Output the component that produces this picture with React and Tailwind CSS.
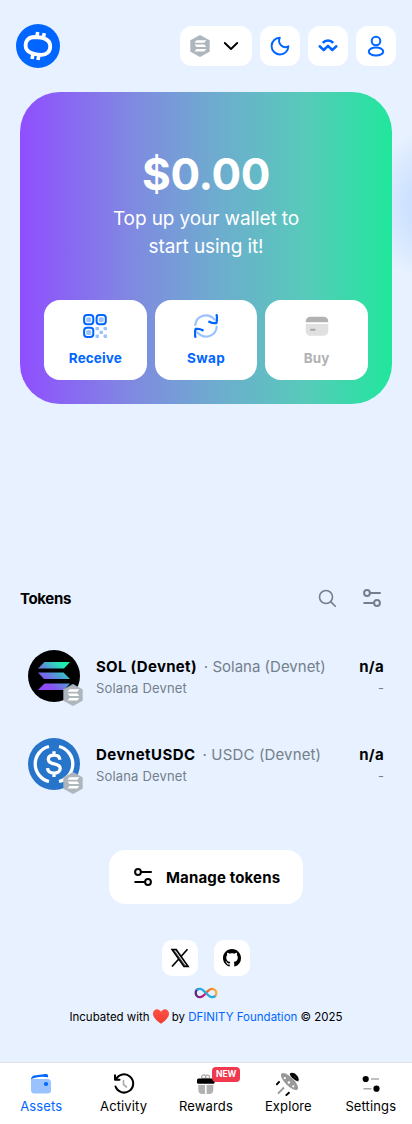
import React from "react";

const SolBars = ({ fill }) => (
  <g fill={fill}>
    <path d="M6.5 0H32l-6 6.5H0z" />
    <path d="M0 10.5h25.5l6.5 6.5H6z" />
    <path d="M6.5 21.5H32L26 28H0z" />
  </g>
);

const HexSolana = ({ className }) => (
  <svg viewBox="0 0 20 22" className={className}>
    <path d="M10 0.2 19.4 5.4v11.2L10 21.8 0.6 16.6V5.4z" fill="#adb5bd" stroke="#adb5bd" strokeWidth=".5" strokeLinejoin="round" />
    <path d="M6.5 5.2h9.8l-2 2.5H4.5zM4.5 9.6h9.8l2 2.5H6.5zM6.5 14h9.8l-2 2.5H4.5z" fill="#fff" />
  </svg>
);

const Sliders = ({ className }) => (
  <svg viewBox="0 0 20 20" className={className} fill="none" stroke="currentColor" strokeWidth="2" strokeLinecap="round">
    <circle cx="5" cy="5" r="2.900" />
    <path d="M8.500 5H18M2.200 15h9" />
    <circle cx="15" cy="15" r="2.900" />
  </svg>
);

const Logo = () => (
  <svg viewBox="0 0 44 44" className="size-11">
    <circle cx="22" cy="22" r="22" fill="#0066ff" />
    <path d="M18.500 13c-5.700 0-8.900 3.200-8.900 8.600 0 6.200 6.200 8.900 15.800 9.300 5.200.1 8.800-3 8.800-8.600 0-6.200-6.200-9.200-15.700-9.300z" fill="none" stroke="#fff" strokeWidth="3.800" />
    <path d="m21 12 .7-4M27.500 13l.8-3.800M16 35l.8-4M22 36l.8-4" stroke="#fff" strokeWidth="3.600" />
  </svg>
);

const Moon = () => (
  <svg viewBox="0 0 20 20" className="size-5" fill="none" stroke="#0066ff" strokeWidth="1.900" strokeLinejoin="round">
    <path d="M9.800 1.700A8.400 8.400 0 1 0 18.400 10.300C13.500 13 7 8.300 9.800 1.700z" />
  </svg>
);

const WalletConnect = () => (
  <svg viewBox="0 0 20 20" className="size-5" fill="none" stroke="#0066ff" strokeWidth="2.500">
    <path d="M4.800 6.900C7.500 3.800 12.500 3.800 15.200 6.900" />
    <path d="m1 9.600 4.700 4.400L10 9.900l4.300 4.100L19 9.600" strokeLinejoin="round" />
  </svg>
);

const Person = () => (
  <svg viewBox="0 0 20 22" className="h-[22px] w-5" fill="none" stroke="#0066ff" strokeWidth="2">
    <circle cx="10" cy="6" r="4.300" />
    <ellipse cx="10" cy="16.500" rx="7.200" ry="4" />
  </svg>
);

const Qr = () => (
  <svg viewBox="0 0 24 24" className="size-6">
    {[[1.1, 1.1], [13.6, 1.1], [1.1, 13.8]].map(([x, y]) => (
      <g key={x + "-" + y}>
        <rect x={x} y={y} width="9.200" height="9.200" rx="3" fill="#fff" stroke="#0066ff" strokeWidth="2" />
        <rect x={x + 2.1} y={y + 2.1} width="5" height="5" rx="1.500" fill="#99c2ff" />
      </g>
    ))}
    {[[12.5, 13], [20.5, 13], [16.5, 16.8], [12.5, 20.6], [20.5, 20.6]].map(([x, y]) => (
      <rect key={x + "-" + y} x={x} y={y} width="3.500" height="3.300" rx=".8" fill="#99c2ff" />
    ))}
  </svg>
);

const Swap = () => (
  <svg viewBox="0 0 24 24" className="size-6" fill="none" strokeLinecap="round" strokeLinejoin="round">
    <path d="M1.300 11C2 2.500 13-2.500 20.500 5.500M22.700 12.800C22 21.500 11 26.500 3.500 18.500" stroke="#99c2ff" strokeWidth="2.200" />
    <path d="M22.700 1.200c.5 3.300.5 5.300-.4 7.800-2.400.5-4.500.2-7-1.200M1.300 22.800c-.5-3.300-.5-5.300.4-7.800 2.400-.5 4.500-.2 7 1.200" stroke="#0066ff" strokeWidth="2.300" />
  </svg>
);

const Card = () => (
  <svg viewBox="0 0 24 24" className="size-6">
    <path d="M.7 8.300c0-3.800 2-5.500 5.300-5.500h12c3.300 0 5.300 1.700 5.300 5.500z" fill="#b2b2b2" />
    <path d="M.7 10h22.600v6.500c0 3.300-2 5.300-5.300 5.300H6c-3.300 0-5.300-2-5.300-5.300z" fill="#e0e0e0" />
    <path d="M6 15.700h3.600" stroke="#a6a6a6" strokeWidth="2" strokeLinecap="round" />
  </svg>
);

const Usdc = () => (
  <svg viewBox="0 0 52 52" className="size-13">
    <circle cx="26" cy="26" r="26" fill="#2775ca" />
    <g fill="none" stroke="#fff" strokeWidth="3.300">
      <path d="M21 8.500a18 18 0 0 0 0 35M31 8.500a18 18 0 0 1 0 35" />
      <path d="M31.800 21.800c0-3-2.400-4.600-5.800-4.600s-5.700 1.600-5.700 4.300c0 6.300 11.900 2.600 11.900 9 0 2.800-2.600 4.600-6.200 4.600-4 0-6.200-1.800-6.500-5M26 13.200v4M26 35v4" />
    </g>
  </svg>
);

const Sol = () => (
  <svg viewBox="0 0 52 52" className="size-13">
    <defs>
      <linearGradient id="sol" gradientUnits="userSpaceOnUse" x1="3" y1="29" x2="28" y2="-2">
        <stop offset="0" stopColor="#9945ff" />
        <stop offset=".25" stopColor="#8752f3" />
        <stop offset=".55" stopColor="#5497d5" />
        <stop offset=".8" stopColor="#28e0b9" />
        <stop offset="1" stopColor="#19fb9b" />
      </linearGradient>
    </defs>
    <circle cx="26" cy="26" r="26" fill="#000" />
    <g transform="translate(10 12)"><SolBars fill="url(#sol)" /></g>
  </svg>
);

const GitHub = () => (
  <svg viewBox="0 0 16 16" className="size-[18px]">
    <path d="M8 0C3.580 0 0 3.580 0 8c0 3.540 2.290 6.530 5.470 7.590.4.070.55-.17.55-.38 0-.19-.01-.82-.01-1.490-2.010.37-2.530-.49-2.690-.94-.09-.23-.48-.94-.82-1.130-.28-.15-.68-.52-.01-.53.63-.01 1.080.58 1.230.82.72 1.210 1.870.87 2.330.66.07-.52.28-.87.51-1.070-1.780-.2-3.640-.89-3.640-3.950 0-.87.31-1.590.82-2.150-.08-.2-.36-1.020.08-2.120 0 0 .67-.21 2.200.82.64-.18 1.320-.27 2-.27s1.360.09 2 .27c1.530-1.040 2.200-.82 2.200-.82.44 1.100.16 1.920.08 2.120.51.56.82 1.270.82 2.150 0 3.070-1.870 3.750-3.650 3.950.29.25.54.73.54 1.480 0 1.070-.01 1.930-.01 2.200 0 .21.15.46.55.38A8.010 8.010 0 0 0 16 8c0-4.420-3.580-8-8-8z" />
  </svg>
);

const XLogo = () => (
  <svg viewBox="0 0 20 20" className="size-5">
    <path d="M2.200 1.700h4L18 18.300h-4zM8.600 11.200 2 18.500M17.500 1.200l-6.300 7" fill="none" stroke="#000" strokeWidth="1.700" />
    <path d="m4.200 2.500 11.200 15.500" stroke="#000" strokeWidth=".7" />
  </svg>
);

const Infinity = () => (
  <svg viewBox="0 0 24 12" className="h-3 w-6" fill="none" strokeWidth="2.300">
    <defs>
      <linearGradient id="ia"><stop offset="0" stopColor="#522785" /><stop offset="1" stopColor="#ed1e79" /></linearGradient>
      <linearGradient id="ib"><stop offset="0" stopColor="#f15a24" /><stop offset="1" stopColor="#fbb03b" /></linearGradient>
    </defs>
    <path d="M12 6C9.500 9 8.500 10.200 6 10.200A4.200 4.200 0 0 1 1.700 6c0-2.200 1.600-4 3.500-4.200" stroke="url(#ia)" />
    <path d="M12 6c2.500-3 3.500-4.200 6-4.200A4.200 4.200 0 0 1 22.300 6c0 2.200-1.600 4-3.500 4.200" stroke="url(#ib)" />
    <path d="M2.700 3.200C3.500 2.200 4.600 1.800 6 1.800c4.500 0 7.500 8.400 12 8.400 1.400 0 2.500-.6 3.300-1.500" stroke="#29abe2" />
  </svg>
);

const Heart = () => (
  <svg viewBox="0 0 16 15" className="h-[15px] w-4">
    <defs><linearGradient id="heart" x2="0" y2="1"><stop stopColor="#ff5244" /><stop offset="1" stopColor="#f03c2f" /></linearGradient></defs>
    <path d="M8 14.700C5 12.500 0 9 0 4.800 0-.5 6-1.200 8 2.800 10-1.200 16-.5 16 4.800 16 9 11 12.500 8 14.700z" fill="url(#heart)" />
  </svg>
);

const WalletIcon = () => (
  <svg viewBox="0 0 24 24" className="size-6">
    <path d="M2 7h16.500A3.500 3.500 0 0 1 22 10.500V18a3.500 3.500 0 0 1-3.500 3.500h-13A3.500 3.500 0 0 1 2 18z" fill="#99c2ff" />
    <path d="M2 7.300c.3-3 2.500-3.700 5-4L16.500 2c2-.3 2.800.7 2.600 3.300C13 3.900 6 5 2 7.300z" fill="#0066ff" />
    <circle cx="17" cy="12" r="2.100" fill="#0066ff" />
  </svg>
);

const Activity = () => (
  <svg viewBox="0 0 24 24" className="size-6" fill="none" strokeWidth="2" strokeLinecap="round" strokeLinejoin="round">
    <path d="M3 3.200v4.500h4.500M4 7.300A9.100 9.100 0 1 1 3.500 14.500" stroke="#000" />
    <path d="M11.500 8.500v4.200l3 2.300" stroke="#a8a8a8" strokeWidth="1.600" />
  </svg>
);

const Gift = () => (
  <svg viewBox="0 0 24 24" className="size-6">
    <path d="M12 6.500H8.300a2.100 2.100 0 1 1 3.400-2.300V6.500 4.200A2.100 2.100 0 1 1 15.200 6.500z" fill="none" stroke="#aaa" strokeWidth="1.300" />
    <path d="M4.300 13h6.700v9H8.300c-2.500 0-4-1.500-4-4zM12.600 13h6.700v5c0 2.500-1.500 4-4 4h-2.700z" fill="#b2b2b2" />
    <rect x="3" y="6.500" width="17.600" height="5.200" rx="1.500" />
  </svg>
);

const Rocket = () => (
  <svg viewBox="0 0 24 24" className="size-6">
    <ellipse cx="13.500" cy="9.500" rx="4.400" ry="11.200" transform="rotate(-45 13.500 9.500)" fill="#999" />
    <path d="M13.800 1.700c3.200-3.500 11.200 3.500 8.300 7.700-1.400-3-4.500-6.200-8.300-7.700z" />
    <path d="M13.800 1.700c2.500.2 8 5.200 8.300 7.700-2.500-.4-8.500-5.300-8.300-7.700z" />
    <g fill="#fff"><circle cx="8.800" cy="6.200" r="1.100" /><circle cx="12.900" cy="10.500" r="1.200" /><circle cx="17.300" cy="14.300" r="1.100" /></g>
    <g strokeWidth="1.900"><path d="M3.600 9.300.3 12.900M13.500 20.200l-3.800 3.400" stroke="#000" /><path d="M8 15.500 2 21.700" stroke="#999" /></g>
  </svg>
);

const SettingsIcon = () => (
  <svg viewBox="0 0 24 24" className="size-6" strokeWidth="1.600">
    <circle cx="6.700" cy="7" r="3.100" /><circle cx="17.500" cy="16.700" r="3.100" />
    <path d="M12 7h8M4.500 16.700h8" stroke="#aaa" />
  </svg>
);

const IconButton = ({ children }) => (
  <button className="grid size-10 place-items-center rounded-xl bg-white">{children}</button>
);

const Action = ({ icon, label, className }) => (
  <button className={`flex flex-1 flex-col items-center rounded-2xl bg-white pt-[14px] text-[13.5px] font-bold leading-5 ${className}`}>
    {icon}
    <span className="mt-[10px]">{label}</span>
  </button>
);

const Token = ({ logo, symbol, name, symbolClass, nameClass }) => (
  <li className="flex h-[88px] items-center px-2">
    <div className="relative size-13">
      {logo}
      <HexSolana className="absolute -right-[3px] -bottom-1 h-[22px] w-5" />
    </div>
    <div className="ml-4 flex-1">
      <div className="flex items-baseline pt-px text-[15px] leading-[23px]">
        <span className={`font-bold ${symbolClass}`}>{symbol}</span>
        <span className={`ml-[7px] text-[#747f8b] ${nameClass}`}>· {name}</span>
      </div>
      <div className="text-[13px] leading-5 tracking-[0.17px] text-[#747f8b]">Solana Devnet</div>
    </div>
    <div className="text-right">
      <div className="pt-px text-[15px] font-bold leading-[23px] tracking-[0.3px]">n/a</div>
      <div className="text-[13px] leading-5 text-[#747f8b]">-</div>
    </div>
  </li>
);

const Tab = ({ icon, label, className = "", badge }) => (
  <a className={`flex w-[82.4px] flex-col items-center ${className}`}>
    <span className="relative">
      {icon}
      {badge && <span className="absolute left-[18px] -top-[5px] rounded bg-[#f0384f] px-1 text-[8.5px] font-bold leading-[15px] text-white">NEW</span>}
    </span>
    <span className="text-[13px] leading-[21px] tracking-[0.12px]">{label}</span>
  </a>
);

export default function App() {
  return (
    <div className="flex h-[1124px] w-[412px] flex-col overflow-hidden bg-[#e7f1ff] bg-[radial-gradient(ellipse_70px_75px_at_435px_205px,#c4dcff_0%,#d0e3ff_45%,#e7f1ff_100%)] bg-no-repeat font-['Inter',sans-serif] text-base text-black">
      <header className="flex items-center px-4 pt-6">
        <Logo />
        <div className="ml-auto flex gap-2">
          <button className="flex h-10 w-[72px] items-center justify-between rounded-xl bg-white pl-[10px] pr-[13px]">
            <HexSolana className="h-[22px] w-5" />
            <svg viewBox="0 0 16 10" className="h-[10px] w-4" fill="none" stroke="#000" strokeWidth="1.900" strokeLinecap="round" strokeLinejoin="round"><path d="m1.800 2 6.200 6 6.200-6" /></svg>
          </button>
          <IconButton><Moon /></IconButton>
          <IconButton><WalletConnect /></IconButton>
          <IconButton><Person /></IconButton>
        </div>
      </header>

      <main className="flex flex-1 flex-col px-5">
        <section className="mt-6 flex h-[312px] flex-col rounded-[40px] bg-[linear-gradient(90deg,#904eff_0%,#7f8be0_31%,#6eaccf_53%,#57caba_77%,#20e79c_100%)] px-6 pt-[52px] text-center text-white">
          <div className="text-[44px] font-bold leading-[60px] tracking-[-0.4px]">$0.00</div>
          <p className="pt-px text-[19px] leading-7 tracking-[-0.1px]">Top up your wallet to<br />start using it!</p>
          <div className="mt-[39px] flex h-20 gap-2">
            <Action icon={<Qr />} label="Receive" className="tracking-[0.1px] text-[#0066ff]" />
            <Action icon={<Swap />} label="Swap" className="tracking-[0.4px] text-[#0066ff]" />
            <Action icon={<Card />} label="Buy" className="tracking-[0.1px] text-[#b2b2b2]" />
          </div>
        </section>

        <section className="mt-[182px]">
          <div className="flex h-6 items-center">
            <h2 className="pt-[2px] text-[15px] font-bold tracking-[-0.35px]">Tokens</h2>
            <svg viewBox="0 0 20 20" className="ml-auto mr-[25px] size-5" fill="none" stroke="#747f8b" strokeWidth="1.600" strokeLinecap="round"><circle cx="9" cy="9" r="6.500" /><path d="m13.900 13.900 4.400 4.400" /></svg>
            <Sliders className="mr-[10px] size-5 text-[#747f8b]" />
          </div>
          <ul className="mt-[22px]">
            <Token logo={<Sol />} symbol="SOL (Devnet)" name="Solana (Devnet)" symbolClass="tracking-[0.3px]" nameClass="tracking-[0px]" />
            <Token logo={<Usdc />} symbol="DevnetUSDC" name="USDC (Devnet)" symbolClass="tracking-[0.45px]" nameClass="tracking-[0.15px]" />
          </ul>
        </section>

        <button className="mt-[42px] flex h-[54px] w-[194px] items-center self-center rounded-2xl bg-white pl-6 text-[15px] font-bold tracking-[0.15px]">
          <Sliders className="mr-[13px] size-5" /><span className="pt-[2px]">Manage tokens</span>
        </button>

        <footer className="mt-9 flex flex-col items-center">
          <div className="flex gap-4">
            <a className="grid size-9 place-items-center rounded-[10px] bg-white"><XLogo /></a>
            <a className="grid size-9 place-items-center rounded-[10px] bg-white"><GitHub /></a>
          </div>
          <div className="mt-[11px]"><Infinity /></div>
          <p className="mt-[10px] flex items-center whitespace-nowrap text-[11.500px] leading-4">
            Incubated with<span className="mx-[3px] -mt-px"><Heart /></span>by&nbsp;<a className="text-[#0066ff]">DFINITY Foundation</a>&nbsp;© 2025
          </p>
        </footer>
      </main>

      <nav className="flex h-[62px] border-t border-[#dee2e6] bg-white pt-[9px]">
        <Tab icon={<WalletIcon />} label="Assets" className="text-[#0066ff]" />
        <Tab icon={<Activity />} label="Activity" />
        <Tab icon={<Gift />} label="Rewards" badge />
        <Tab icon={<Rocket />} label="Explore" />
        <Tab icon={<SettingsIcon />} label="Settings" />
      </nav>
    </div>
  );
}
